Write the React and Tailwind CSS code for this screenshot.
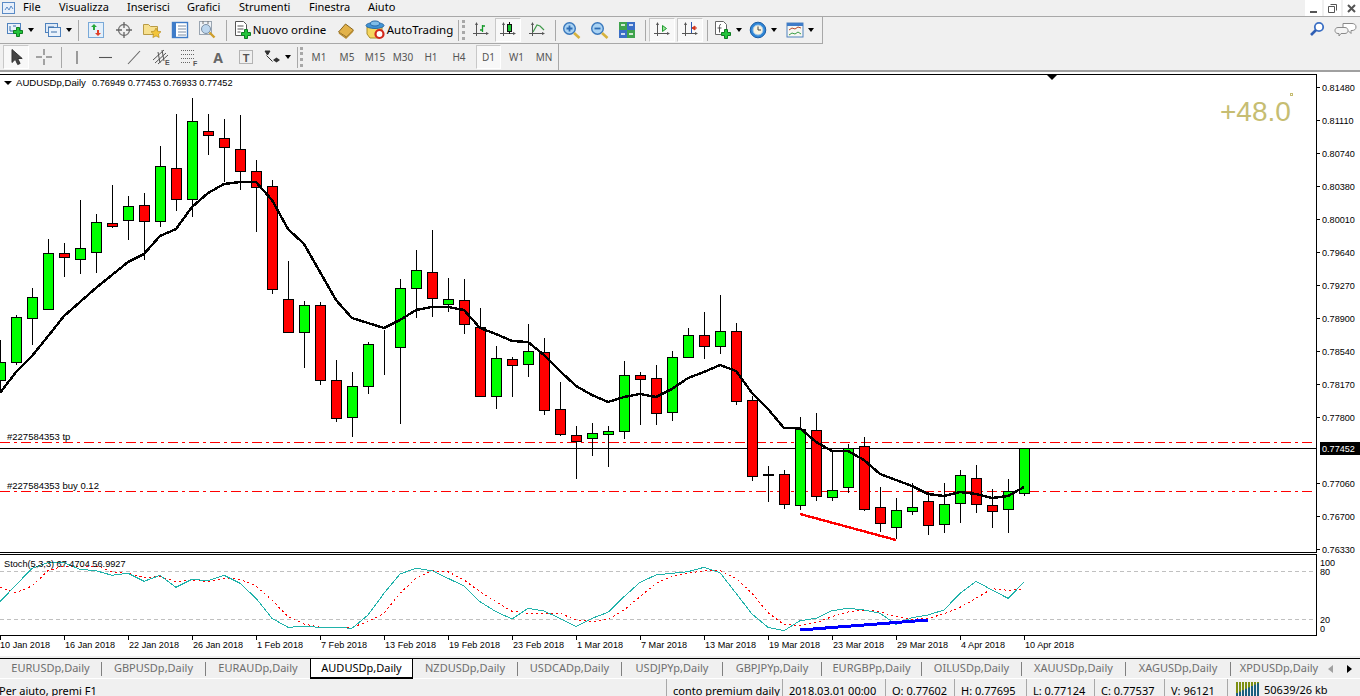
import React from "react";

const G = "#00ff00";
const R = "#ff0000";

// x index (16px step), wick top, wick bottom, body top, body bottom, colour
const candles = [
  [0, 340, 393, 362, 380, G], [1, 315, 365, 317, 362, G], [2, 288, 345, 297, 318, G],
  [3, 239, 310, 253, 309, G], [4, 243, 277, 253, 257, R], [5, 200, 274, 248, 259, G],
  [6, 214, 273, 222, 252, G], [7, 185, 228, 223, 226, R], [8, 196, 240, 206, 220, G],
  [9, 193, 260, 205, 221, R], [10, 146, 227, 166, 221, G], [11, 114, 211, 168, 199, R],
  [12, 98, 217, 121, 199, G], [13, 114, 155, 131, 135, R], [14, 119, 182, 138, 147, R],
  [15, 115, 190, 149, 171, R], [16, 160, 232, 171, 187, R], [17, 180, 294, 186, 289, R],
  [18, 261, 333, 299, 332, R], [19, 301, 368, 305, 332, G], [20, 302, 385, 305, 380, R],
  [21, 360, 422, 380, 418, R], [22, 372, 437, 386, 417, G], [23, 342, 394, 344, 386, G],
  [24, 330, 375, 347, 347, G], [25, 279, 424, 288, 347, G], [26, 250, 318, 270, 288, G],
  [27, 230, 317, 272, 298, R], [28, 278, 312, 299, 304, G], [29, 279, 334, 300, 324, R],
  [30, 308, 397, 327, 396, R], [31, 346, 409, 358, 396, G], [32, 357, 397, 359, 365, R],
  [33, 324, 377, 351, 364, G], [34, 338, 415, 352, 410, R], [35, 382, 436, 409, 434, R],
  [36, 426, 479, 435, 441, R], [37, 423, 456, 433, 438, G], [38, 426, 467, 431, 434, G],
  [39, 361, 439, 375, 431, G], [40, 372, 425, 375, 379, R], [41, 365, 425, 378, 413, R],
  [42, 351, 421, 357, 412, G], [43, 328, 358, 335, 357, G], [44, 312, 359, 335, 346, R],
  [45, 295, 354, 331, 346, G], [46, 323, 405, 331, 401, R], [47, 396, 481, 400, 476, R],
  [48, 466, 502, 474, 475, R], [49, 470, 509, 474, 504, R], [50, 417, 510, 429, 505, G],
  [51, 413, 501, 430, 496, R], [52, 450, 501, 490, 497, G], [53, 444, 493, 448, 487, G],
  [54, 437, 511, 446, 509, R], [55, 487, 532, 507, 523, R], [56, 498, 539, 510, 527, G],
  [57, 483, 515, 507, 511, G], [58, 492, 535, 501, 525, R], [59, 483, 533, 504, 524, G],
  [60, 470, 523, 475, 503, G], [61, 465, 513, 478, 504, R], [62, 489, 528, 505, 511, R],
  [63, 479, 533, 491, 509, G], [64, 448, 496, 448, 493, G],
];

const maLine =
  "0,393 16,372 32,356 53,330 64,316 80,302 97,287 112,275 128,262 144,254 160,236 176,229 192,207 208,193 224,184 240,182 256,182 272,200 288,229 304,244 320,272 336,300 352,318 368,323 384,328 400,320 416,310 432,307 448,307 464,310 480,328 496,334 512,341 528,342 544,355 560,371 576,386 592,395 608,402 624,397 640,394 656,397 672,389 688,378 704,372 720,365 736,371 752,393 768,409 784,428 800,428 816,442 832,451 848,451 864,460 880,474 896,480 912,486 928,494 944,496 960,492 976,494 992,498 1008,496 1024,487";

const stochMain = [155, 105, 55, 38, 38, 58, 62, 76, 70, 94, 76, 112, 88, 92, 76, 100, 145, 205, 232, 229, 232, 232, 235, 195, 130, 72, 55, 62, 85, 108, 155, 185, 207, 175, 183, 205, 230, 205, 187, 140, 97, 75, 70, 65, 52, 68, 130, 192, 232, 242, 212, 205, 182, 175, 180, 190, 223, 203, 195, 180, 130, 94, 120, 145, 97];
const stochSignal = [112, 128, 108, 62, 48, 48, 48, 65, 70, 82, 80, 95, 90, 95, 85, 88, 108, 150, 200, 222, 232, 232, 232, 215, 190, 130, 85, 62, 65, 90, 125, 155, 184, 190, 190, 190, 210, 215, 208, 180, 140, 100, 80, 70, 62, 62, 85, 130, 188, 224, 226, 218, 200, 186, 180, 185, 200, 208, 205, 192, 172, 145, 116, 121, 118];
const toPoints = (list) => list.map((z, k) => `${k * 16},${(550 + z / 3).toFixed(1)}`).join(" ");

const prices = [
  ["0.81480", 87], ["0.81110", 120], ["0.80740", 153], ["0.80380", 186], ["0.80010", 219],
  ["0.79640", 252], ["0.79270", 285], ["0.78900", 318], ["0.78540", 351], ["0.78170", 384],
  ["0.77800", 417], ["0.77060", 483], ["0.76700", 516], ["0.76330", 549],
];
const dates = ["10 Jan 2018", "16 Jan 2018", "22 Jan 2018", "26 Jan 2018", "1 Feb 2018", "7 Feb 2018", "13 Feb 2018", "19 Feb 2018", "23 Feb 2018", "1 Mar 2018", "7 Mar 2018", "13 Mar 2018", "19 Mar 2018", "23 Mar 2018", "29 Mar 2018", "4 Apr 2018", "10 Apr 2018"];

const tabs = [
  ["EURUSDp,Daily", 102, true], ["GBPUSDp,Daily", 104, true], ["EURAUDp,Daily", 104, false],
  ["AUDUSDp,Daily", 103, false, true], ["NZDUSDp,Daily", 105, true], ["USDCADp,Daily", 104, true],
  ["USDJPYp,Daily", 101, true], ["GBPJPYp,Daily", 99, true], ["EURGBPp,Daily", 100, true],
  ["OILUSDp,Daily", 100, true], ["XAUUSDp,Daily", 104, true], ["XAGUSDp,Daily", 105, true],
  ["XPDUSDp,Daily", 96, false],
];
const statusCells = [
  ["conto premium daily", 116], ["2018.03.01 00:00", 103], ["O: 0.77602", 69], ["H: 0.77695", 72],
  ["L: 0.77124", 68], ["C: 0.77537", 70], ["V: 96121", 63],
];
const menu = [["File", 36], ["Visualizza", 68], ["Inserisci", 60], ["Grafici", 52], ["Strumenti", 70], ["Finestra", 59], ["Aiuto", 47]];

const Ico = ({ w = 18, h = 18, children }) => (
  <svg width={w} height={h} viewBox={`0 0 ${w} ${h}`} className="shrink-0">{children}</svg>
);

const Plus = ({ x, y }) => (
  <path transform={`translate(${x} ${y})`} d="M3.5.5h3v3h3v3h-3v3h-3v-3h-3v-3h3z" fill="#22c43a" stroke="#0e7d20" />
);

const IconNewChart = () => (
  <Ico>
    <rect x="1.5" y="2.5" width="13" height="10" fill="#eaf2fb" stroke="#4f82bd" />
    <path d="M4 5v5h6M7 5h3" stroke="#3b6ea8" fill="none" />
    <Plus x="7" y="6" />
  </Ico>
);
const IconProfiles = () => (
  <Ico>
    <rect x="1.5" y="2.5" width="12" height="9" fill="#dfeaf7" stroke="#4f82bd" />
    <rect x="4.5" y="6.5" width="12" height="9" fill="#eaf2fb" stroke="#4f82bd" />
    <path d="M4 6h6M7 11h6" stroke="#3b6ea8" />
  </Ico>
);
const IconMarket = () => (
  <Ico>
    <rect x="1.5" y="1.5" width="15" height="15" fill="#e4f0fa" stroke="#79a9d8" />
    <path d="M7 3l3 3H8v3H6V6H4z" fill="#25a83a" />
    <path d="M11 15l-3-3h2V9h2v3h2z" fill="#e0402a" />
  </Ico>
);
const IconCross = () => (
  <Ico>
    <circle cx="9" cy="9" r="5.5" fill="none" stroke="#777" strokeWidth="1.3" />
    <path d="M9 1v6M9 11v6M1 9h6M11 9h6" stroke="#666" strokeWidth="1.3" />
  </Ico>
);
const IconFolderStar = () => (
  <Ico w={20}>
    <path d="M1.5 3.5h5l2 2h7v8h-14z" fill="#f7e08e" stroke="#b99b45" />
    <path d="M14 7l1.6 3.2 3.4.5-2.5 2.4.6 3.4-3.1-1.6-3.1 1.6.6-3.4-2.5-2.4 3.4-.5z" fill="#f3c53a" stroke="#b68d1f" strokeWidth=".7" />
  </Ico>
);
const IconTerminal = () => (
  <Ico>
    <rect x="1.5" y="1.5" width="15" height="15" fill="#fff" stroke="#3f7cc8" strokeWidth="1.4" />
    <rect x="2" y="2" width="3" height="14" fill="#3f7cc8" />
    <path d="M7 5h8M7 8h8M7 11h8M7 14h8" stroke="#7a8ca3" />
  </Ico>
);
const IconTester = () => (
  <Ico w={20} h={20}>
    <rect x="1.5" y="1.5" width="12" height="13" fill="#eef2f6" stroke="#9aa5b1" />
    <path d="M5 1v3M10 1v3" stroke="#777" />
    <circle cx="8" cy="9" r="4.5" fill="#bcd6ee" stroke="#7b8ea3" />
    <path d="M11.5 12.5l5 5" stroke="#cf9f2c" strokeWidth="2.4" />
  </Ico>
);
const IconOrder = () => (
  <Ico w={18} h={21}>
    <path d="M1.5 1.5h8l3 3v11h-11z" fill="#fff" stroke="#555" />
    <path d="M3.5 6h6M3.5 9h6M3.5 12h3" stroke="#555" />
    <Plus x="7" y="9" />
  </Ico>
);
const IconBook = () => (
  <Ico>
    <path d="M1.5 11l7-8 8 6-7 7z" fill="#e2b24a" stroke="#8a6720" />
    <path d="M2 12l7 5 7-7" fill="none" stroke="#b78a2e" strokeWidth="1.4" />
  </Ico>
);
const IconAuto = () => (
  <Ico w={21} h={20}>
    <path d="M2 7h15v7l-3 4H5l-3-4z" fill="#f5d65e" stroke="#a88c2a" />
    <ellipse cx="10" cy="5.5" rx="9" ry="3" fill="#3f93d6" stroke="#286aa6" />
    <ellipse cx="10" cy="3.5" rx="4.5" ry="2.5" fill="#7fbde8" stroke="#286aa6" />
    <circle cx="14.5" cy="14" r="4" fill="#fff" stroke="#d2261a" strokeWidth="2.2" />
  </Ico>
);
const Axes = () => (
  <g>
    <path d="M4.5 2v13M1 12.5h15" stroke="#555" fill="none" />
    <path d="M3 4l1.5-3L6 4zM14 11l3 1.5-3 1.5z" fill="#555" />
  </g>
);
const IconBars = () => (
  <Ico>
    <Axes />
    <path d="M10.5 4v7M8 9h2.5M10.5 5H13" stroke="#159a2a" strokeWidth="1.3" fill="none" />
  </Ico>
);
const IconCandle = () => (
  <Ico>
    <Axes />
    <path d="M10.5 1v12" stroke="#111" />
    <rect x="8.5" y="3.5" width="4" height="7" fill="#19c832" stroke="#111" />
  </Ico>
);
const IconLine = () => (
  <Ico>
    <Axes />
    <path d="M5 11l4-7 3 1 4 4" fill="none" stroke="#3f9a4a" strokeWidth="1.2" />
  </Ico>
);
const IconZoom = ({ minus }) => (
  <Ico w={19} h={19}>
    <circle cx="7.5" cy="7.5" r="5.8" fill="#a9d2f3" stroke="#3a78bc" strokeWidth="1.4" />
    <path d={minus ? "M4.5 7.5h6" : "M4.5 7.5h6M7.5 4.5v6"} stroke="#2d6cb4" strokeWidth="1.8" />
    <path d="M12 12l5.5 5" stroke="#d6b23e" strokeWidth="2.6" />
  </Ico>
);
const IconTile = () => (
  <Ico>
    <rect x="1" y="1" width="8" height="8" fill="#3fa34d" />
    <rect x="9" y="1" width="8" height="8" fill="#3a6fc6" />
    <rect x="1" y="9" width="8" height="8" fill="#3a6fc6" />
    <rect x="9" y="9" width="8" height="8" fill="#3fa34d" />
    <path d="M3 4h4M11 4h4M3 13h4M11 13h4" stroke="#fff" strokeWidth="1.5" />
  </Ico>
);
const IconScroll = () => (
  <Ico>
    <Axes />
    <path d="M9.5 4.5v6l4-3z" fill="#9be39b" stroke="#1e9c2e" />
  </Ico>
);
const IconShift = () => (
  <Ico>
    <Axes />
    <path d="M10.5 1v11" stroke="#2c58b0" />
    <path d="M11 7h5M11 7l3-2v4z" fill="#d2371f" stroke="#d2371f" />
  </Ico>
);
const IconIndicator = () => (
  <Ico w={18} h={20}>
    <path d="M1.5 1.5h8l3 3v10h-11z" fill="#fff" stroke="#666" />
    <path d="M7 4.5C5 4.500 5.500 6 5.500 8v4.500M3.500 8h4" stroke="#555" fill="none" />
    <Plus x="7" y="9" />
  </Ico>
);
const IconClock = () => (
  <Ico>
    <circle cx="9" cy="9" r="7.8" fill="#2f86d6" stroke="#1c5da5" />
    <circle cx="9" cy="9" r="5" fill="#f8f3df" stroke="#9fc5e8" />
    <path d="M9 5.500V9h3" stroke="#444" fill="none" />
  </Ico>
);
const IconTemplate = () => (
  <Ico>
    <rect x="1" y="2" width="16" height="14" fill="#f6f6f2" stroke="#4f82bd" />
    <rect x="1" y="2" width="16" height="3" fill="#3f7cc8" />
    <path d="M3 9l3-2 3 1 3-2 3 1" fill="none" stroke="#b5482a" />
    <path d="M3 14l3-2 3 1 3-2 3 2" fill="none" stroke="#3a9d46" />
  </Ico>
);
const IconPointer = () => (
  <Ico>
    <path d="M5 1.500v13l3.300-3.200 2.400 5.200 2.400-1-2.400-5h4.500z" fill="#444" stroke="#333" />
  </Ico>
);
const IconCrossThin = () => (
  <Ico>
    <path d="M9 1v6M9 11v6M1 9h6M11 9h6" stroke="#555" />
  </Ico>
);
const IconVLine = () => <Ico><path d="M9 3v13" stroke="#555" strokeWidth="1.1" /></Ico>;
const IconHLine = () => <Ico><path d="M2 9.500h13" stroke="#555" strokeWidth="1.1" /></Ico>;
const IconTrend = () => <Ico><path d="M3 16L15 3" stroke="#666" strokeWidth="1.1" /></Ico>;
const IconChannel = () => (
  <Ico w={20}>
    <path d="M1 12L12 2M3 15L14 5M6 16L16 7M6 4l2 11M10 2l2 11" stroke="#555" fill="none" />
    <text x="13" y="17" fontSize="7" fontWeight="700" fill="#555" fontFamily="Liberation Sans, sans-serif">E</text>
  </Ico>
);
const IconFibo = () => (
  <Ico w={20}>
    <path d="M1 2.500h13M1 6.500h13M1 10.500h13M1 14.500h10" stroke="#666" strokeDasharray="1 1" />
    <text x="13" y="18" fontSize="7" fontWeight="700" fill="#555" fontFamily="Liberation Sans, sans-serif">F</text>
  </Ico>
);
const IconLabelT = () => (
  <Ico w={16} h={16}>
    <rect x="1.500" y="1.500" width="13" height="13" fill="none" stroke="#777" strokeDasharray="1 1" />
    <text x="8" y="13" fontSize="11" fontWeight="700" fill="#555" textAnchor="middle" fontFamily="Liberation Sans, sans-serif">T</text>
  </Ico>
);
const IconArrows = () => (
  <Ico>
    <path d="M2 3h5L4.500 7zM3.500 7.500l6 6" stroke="#333" fill="#333" />
    <path d="M10 12l3.500-2.500L17 12l-3.500 2.500z" fill="#333" />
  </Ico>
);
const IconSearch = () => (
  <Ico w={16} h={16}>
    <circle cx="10" cy="6" r="4.200" fill="#fff" stroke="#3b6fc4" strokeWidth="1.800" />
    <path d="M7 9l-5 5" stroke="#2f5fb4" strokeWidth="2.600" />
  </Ico>
);
const IconChat = () => (
  <Ico w={23} h={17}>
    <path d="M9 2.500h9c2 0 4 1 4 3.500s-2 3.500-4 3.500h-1v3l-3-3H9z" fill="#fff" stroke="#8a8a8a" />
    <path d="M4 6.500h7c2 0 3 1.500 3 3s-1 3-3 3H7l-2 2.500v-2.500H4c-2 0-3-1.500-3-3s1-3 3-3z" fill="#f4f4f4" stroke="#8a8a8a" />
  </Ico>
);
const IconMem = () => (
  <svg width="24" height="14" viewBox="0 0 24 14" className="shrink-0">
    {[0, 3, 6, 9, 12, 15, 18, 21].map((x, i) => (
      <g key={x}>
        <rect x={x} y="0" width="2" height="14" fill="#7d8f12" />
        <rect x={x} y={11 - i * 1.4} width="2" height={3 + i * 1.4} fill="#1d5f80" />
      </g>
    ))}
  </svg>
);

const Arrow = () => <span className="ml-[4px] w-0 h-0 border-x-[3.5px] border-x-transparent border-t-[4px] border-t-black shrink-0" />;
const Sep = ({ w = 8 }) => (
  <div className="flex justify-center shrink-0 h-full items-center" style={{ width: w }}>
    <div className="w-px h-[21px] bg-[#a8a8a8]" />
  </div>
);
const Grip = () => (
  <div className="flex justify-center shrink-0 w-[7px] h-full items-center">
    <div className="h-[20px] border-l-[3px] border-dotted border-[#a8a8a8]" />
  </div>
);
const Btn = ({ w, active, children }) => (
  <div
    className={
      active
        ? "shrink-0 h-[24px] flex items-center justify-center border border-t-[#c8c8c8] border-l-[#c8c8c8] border-b-white border-r-white bg-[#f8f8f8]"
        : "shrink-0 h-[24px] flex items-center justify-center"
    }
    style={{ width: w }}
  >
    {children}
  </div>
);
const Tf = ({ w = 28, active, children }) => (
  <Btn w={w} active={active}>
    <span className="text-[10px] text-[#555] font-['Liberation_Sans',sans-serif]">{children}</span>
  </Btn>
);

function Chart() {
  return (
    <svg
      width="1360"
      height="584"
      viewBox="0 72 1360 584"
      className="block shrink-0 bg-white"
      fontFamily="Liberation Sans, sans-serif"
    >
      <path d="M0 74.500H1316.500V552" stroke="#000" fill="none" shapeRendering="crispEdges" />
      <path d="M1047 75h10l-5 5z" fill="#000" />
      <path d="M4 81h8l-4 4z" fill="#000" />
      <text x="16" y="86" fontSize="9.600" fill="#000">AUDUSDp,Daily</text>
      <text x="92" y="86" fontSize="9.200" fill="#000">0.76949 0.77453 0.76933 0.77452</text>
      <text x="1220" y="121" fontSize="28" fill="#c6bd72">+48.0</text>
      <rect x="1290.500" y="93.500" width="2" height="2" fill="none" stroke="#c6bd72" />

      <g shapeRendering="crispEdges">
        <path d="M0 442.500H1316" stroke={R} strokeDasharray="10 4 3 4" />
        <path d="M0 491.500H1316" stroke={R} strokeDasharray="10 4 3 4" />
        <path d="M0 448.500H1316" stroke="#000" />
        {candles.map(([k, wt, wb, bt, bb, c]) => {
          const x = k * 16;
          return (
            <g key={k}>
              <path d={`M${x + 0.5} ${wt}V${wb}`} stroke="#000" />
              <rect x={x - 4.5} y={bt + 0.5} width="10" height={bb - bt} fill={c} stroke="#000" />
            </g>
          );
        })}
        <polyline points={maLine} fill="none" stroke="#000" strokeWidth="2.400" />
        <path d="M800 514L896 540" stroke={R} strokeWidth="2.400" />
      </g>

      <text x="7" y="440" fontSize="9.500" fill="#000">#227584353 tp</text>
      <text x="7" y="489" fontSize="9.500" fill="#000">#227584353 buy 0.12</text>

      {prices.map(([p, y]) => (
        <g key={p}>
          <path d={`M1317 ${y + 0.5}h3`} stroke="#000" shapeRendering="crispEdges" />
          <text x="1322" y={y + 3.500} fontSize="9.100" fill="#000">{p}</text>
        </g>
      ))}
      <rect x="1320" y="442" width="40" height="13" fill="#000" />
      <text x="1322" y="452" fontSize="9.100" fill="#fff">0.77452</text>

      <g shapeRendering="crispEdges">
        <path d="M0 552.500H1317" stroke="#000" />
        <path d="M0 554.500H1316.500V635.500H0" stroke="#000" fill="none" />
        <path d="M0 571.500H1316M0 619.500H1316" stroke="#c0c0c0" strokeDasharray="4 3" />
        <polyline points={toPoints(stochSignal)} fill="none" stroke={R} strokeDasharray="2 3" />
        <polyline points={toPoints(stochMain)} fill="none" stroke="#20b2aa" />
        <path d="M800 630L928 620" stroke="#0000ff" strokeWidth="3" />
      </g>
      <text x="4" y="567" fontSize="9.200" fill="#000">Stoch(5,3,3) 67.4704 56.9927</text>
      {[["100", 566], ["80", 575], ["20", 623], ["0", 632]].map(([t, y]) => (
        <text key={t} x="1320" y={y} fontSize="9.100" fill="#000">{t}</text>
      ))}

      {dates.map((d, i) => (
        <g key={d}>
          <path d={`M${i * 64 + 0.5} 636v4`} stroke="#000" shapeRendering="crispEdges" />
          <text x={i * 64 + 1 - (i === 0 ? 1 : 0)} y="648" fontSize="9.100" fill="#000">{d}</text>
        </g>
      ))}
    </svg>
  );
}

export default function App() {
  return (
    <div className="w-[1360px] h-[696px] overflow-hidden flex flex-col bg-[#f0f0f0] font-['Roboto',sans-serif] text-black">
      <div className="h-[17px] shrink-0 flex items-center border-b border-[#a8a8a8]">
        <svg width="16" height="15" viewBox="0 0 16 15" className="ml-[1px] mr-[6px] shrink-0">
          <rect x="1.500" y="1.500" width="12" height="11" fill="#e8f0fb" stroke="#5b8bc6" />
          <path d="M4 9l2-3 2 3 2-4 2 3" stroke="#5b8bc6" fill="none" />
        </svg>
        {menu.map(([m, w]) => (
          <div key={m} className="text-[11px] leading-[14px] pb-[2px]" style={{ width: w }}>{m}</div>
        ))}
        <div className="ml-auto flex gap-[2px] h-[16px]">
          <div className="w-[17px] bg-white flex items-end justify-center pb-[3px]"><div className="w-[7px] h-[2px] bg-[#555]" /></div>
          <div className="w-[17px] bg-white flex items-center justify-center">
            <svg width="9" height="9" viewBox="0 0 9 9"><path d="M2.500.5h6v6M.5 2.500h6v6h-6z" fill="none" stroke="#555" /></svg>
          </div>
          <div className="w-[17px] bg-white flex items-center justify-center">
            <svg width="9" height="9" viewBox="0 0 9 9"><path d="M1 1l7 7M8 1L1 8" stroke="#555" strokeWidth="2" /></svg>
          </div>
        </div>
      </div>

      <div className="h-[27px] shrink-0 flex">
        <div className="w-[823px] flex items-center border-b border-r border-[#a8a8a8] pl-[4px] shrink-0">
          <Btn w={32}><IconNewChart /><Arrow /></Btn>
          <div className="w-[5px] shrink-0" />
          <Btn w={33}><IconProfiles /><Arrow /></Btn>
          <Sep w={8} />
          <Btn w={28}><IconMarket /></Btn>
          <Btn w={28}><IconCross /></Btn>
          <Btn w={28}><IconFolderStar /></Btn>
          <Btn w={28}><IconTerminal /></Btn>
          <Btn w={28}><IconTester /></Btn>
          <Sep w={8} />
          <Btn w={100}>
            <IconOrder />
            <span className="ml-[1px] text-[11.5px] whitespace-nowrap">Nuovo ordine</span>
          </Btn>
          <Btn w={32}><IconBook /></Btn>
          <Btn w={94}>
            <IconAuto />
            <span className="ml-[1px] text-[11.5px] whitespace-nowrap">AutoTrading</span>
          </Btn>
          <Sep w={4} />
          <Grip />
          <Btn w={27}><IconBars /></Btn>
          <div className="w-[1px] shrink-0" />
          <Btn w={26} active><IconCandle /></Btn>
          <Btn w={32}><IconLine /></Btn>
          <Sep w={4} />
          <Btn w={28}><IconZoom /></Btn>
          <Btn w={28}><IconZoom minus /></Btn>
          <Btn w={28}><IconTile /></Btn>
          <Sep w={8} />
          <Btn w={26} active><IconScroll /></Btn>
          <div className="w-[2px] shrink-0" />
          <Btn w={26} active><IconShift /></Btn>
          <Sep w={9} />
          <Btn w={32}><IconIndicator /><Arrow /></Btn>
          <div className="w-[3px] shrink-0" />
          <Btn w={32}><IconClock /><Arrow /></Btn>
          <div className="w-[5px] shrink-0" />
          <Btn w={32}><IconTemplate /><Arrow /></Btn>
        </div>
        <div className="flex-1 flex items-center justify-end pr-[3px] gap-[9px] pb-[3px]">
          <IconSearch />
          <IconChat />
        </div>
      </div>

      <div className="h-[28px] shrink-0 flex border-b-2 border-[#a0a0a0]">
        <div className="w-[559px] flex items-center border-r border-[#a8a8a8] pl-[3px] shrink-0">
          <Btn w={26} active><IconPointer /></Btn>
          <Btn w={30}><IconCrossThin /></Btn>
          <Sep w={5} />
          <Btn w={26}><IconVLine /></Btn>
          <Btn w={32}><IconHLine /></Btn>
          <Btn w={24}><IconTrend /></Btn>
          <Btn w={32}><IconChannel /></Btn>
          <Btn w={24}><IconFibo /></Btn>
          <Btn w={32}><span className="text-[14px] font-bold text-[#666] font-['Liberation_Sans',sans-serif]">A</span></Btn>
          <Btn w={24}><IconLabelT /></Btn>
          <Btn w={38}><IconArrows /><Arrow /></Btn>
          <Sep w={2} />
          <Grip />
          <Tf>M1</Tf>
          <Tf>M5</Tf>
          <Tf>M15</Tf>
          <Tf>M30</Tf>
          <Tf>H1</Tf>
          <Tf>H4</Tf>
          <div className="w-[3px] shrink-0" />
          <Tf w={25} active>D1</Tf>
          <div className="w-[2px] shrink-0" />
          <Tf w={27}>W1</Tf>
          <Tf>MN</Tf>
        </div>
      </div>

      <Chart />

      <div className="h-[2px] shrink-0" />

      <div className="h-[20px] shrink-0 flex items-center border-t border-black relative">
        {tabs.map(([label, w, sep, active]) => (
          <div
            key={label}
            style={{ width: w }}
            className={
              active
                ? "shrink-0 h-[20px] -mb-[1px] flex items-center justify-center bg-white border-x border-b-2 border-black text-[11px] text-black"
                : "shrink-0 h-[19px] flex items-center text-[11px] text-[#6e6e6e]"
            }
          >
            <span className={active ? "" : "flex-1 text-center whitespace-nowrap"}>{label}</span>
            {sep && <div className="w-px h-[14px] bg-[#808080]" />}
          </div>
        ))}
        <span className="ml-auto w-0 h-0 border-y-[4px] border-y-transparent border-r-[5px] border-r-[#a0a0a0]" />
        <span className="ml-[14px] mr-[8px] w-0 h-0 border-y-[4px] border-y-transparent border-l-[5px] border-l-black" />
      </div>

      <div className="flex-1 min-h-0 flex border-t border-white overflow-hidden text-[11px]">
        <div className="w-[667px] shrink-0 -ml-[1px] leading-[23px] whitespace-nowrap overflow-hidden">Per aiuto, premi F1</div>
        {statusCells.map(([t, w]) => (
          <div
            key={t}
            style={{ width: w }}
            className="shrink-0 border-l border-[#a8a8a8] pl-[6px] leading-[23px] whitespace-nowrap overflow-hidden"
          >
            {t}
          </div>
        ))}
        <div className="flex-1 border-l border-[#a8a8a8] pl-[8px] flex items-end gap-[4px] leading-[23px] whitespace-nowrap">
          <IconMem />
          <span className="-mb-[5px]">50639/26 kb</span>
        </div>
      </div>
    </div>
  );
}
